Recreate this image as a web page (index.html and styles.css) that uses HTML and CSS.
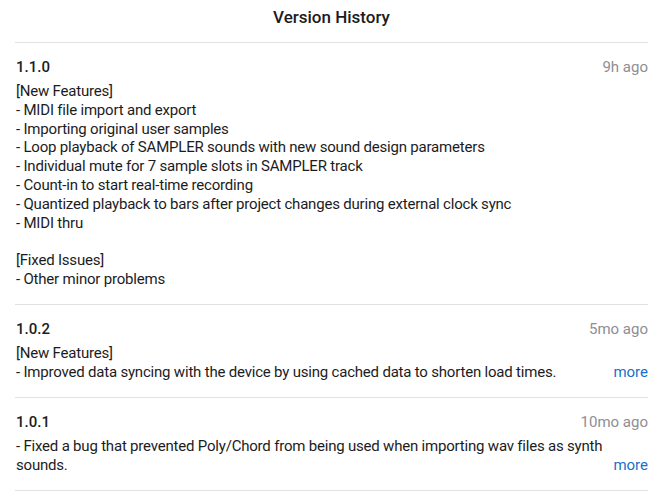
FILE: index.html
```html
<!DOCTYPE html>
<html lang="en">
<head>
    <meta charset="UTF-8">
    <meta name="viewport" content="width=device-width, initial-scale=1.0">
    <title>Version History</title>
    <link rel="stylesheet" href="styles.css">
</head>

<body>
    <header class="sheet-header">
        <h1>Version History</h1>
    </header>

    <!-- Список версий -->
    <div class="history">
        <div class="release">
            <div class="release-head">
                <span class="version">1.1.0</span>
                <span class="date">9h ago</span>
            </div>
            <div class="notes">
                <p class="notes-text">[New Features]
- MIDI file import and export
- Importing original user samples
- Loop playback of SAMPLER sounds with new sound design parameters
- Individual mute for 7 sample slots in SAMPLER track
- Count-in to start real-time recording
- Quantized playback to bars after project changes during external clock sync
- MIDI thru

[Fixed Issues]
- Other minor problems</p>
            </div>
        </div>

        <div class="release">
            <div class="release-head">
                <span class="version">1.0.2</span>
                <span class="date">5mo ago</span>
            </div>
            <div class="notes">
                <p class="notes-text">[New Features]
- Improved data syncing with the device by using cached data to shorten load times.</p>
                <a href="#" class="more">more</a>
            </div>
        </div>

        <div class="release">
            <div class="release-head">
                <span class="version">1.0.1</span>
                <span class="date">10mo ago</span>
            </div>
            <div class="notes">
                <p class="notes-text">- Fixed a bug that prevented Poly/Chord from being used when importing wav files as synth sounds.</p>
                <a href="#" class="more">more</a>
            </div>
        </div>
    </div>
</body>
</html>
```

FILE: styles.css
```css
body {
    font-family: Roboto, "Noto Sans", sans-serif;
    margin: 0;
    padding: 0;
    background-color: #fff;
    color: #1c1c1e;
    overflow: hidden;
}

.sheet-header {
    height: 42px;
    margin: 0 18px 0 15px;
    border-bottom: 1px solid #e2e2e4;
    text-align: center;
}

.sheet-header h1 {
    margin: 0;
    padding-top: 6px;
    font-size: 17px;
    line-height: 22px;
    font-weight: 500;
}

.history {
    margin: 0 18px 0 15px;
}

.release {
    padding: 15px 0 15.5px 1px;
    border-bottom: 1px solid #e2e2e4;
}

.release-head {
    display: flex;
    justify-content: space-between;
    align-items: baseline;
    height: 22px;
    margin-bottom: 2px;
}

.version {
    font-size: 15px;
    font-weight: 500;
}

.date {
    font-size: 15px;
    color: #8e8e93;
}

.notes {
    display: flex;
    align-items: flex-end;
}

.notes-text {
    flex: 1;
    margin: 0;
    font-size: 15px;
    line-height: 18.8px;
    letter-spacing: -0.2px;
    white-space: pre-line;
}

.more {
    font-size: 15px;
    line-height: 18.8px;
    color: #1a6fcc;
    text-decoration: none;
}
```
